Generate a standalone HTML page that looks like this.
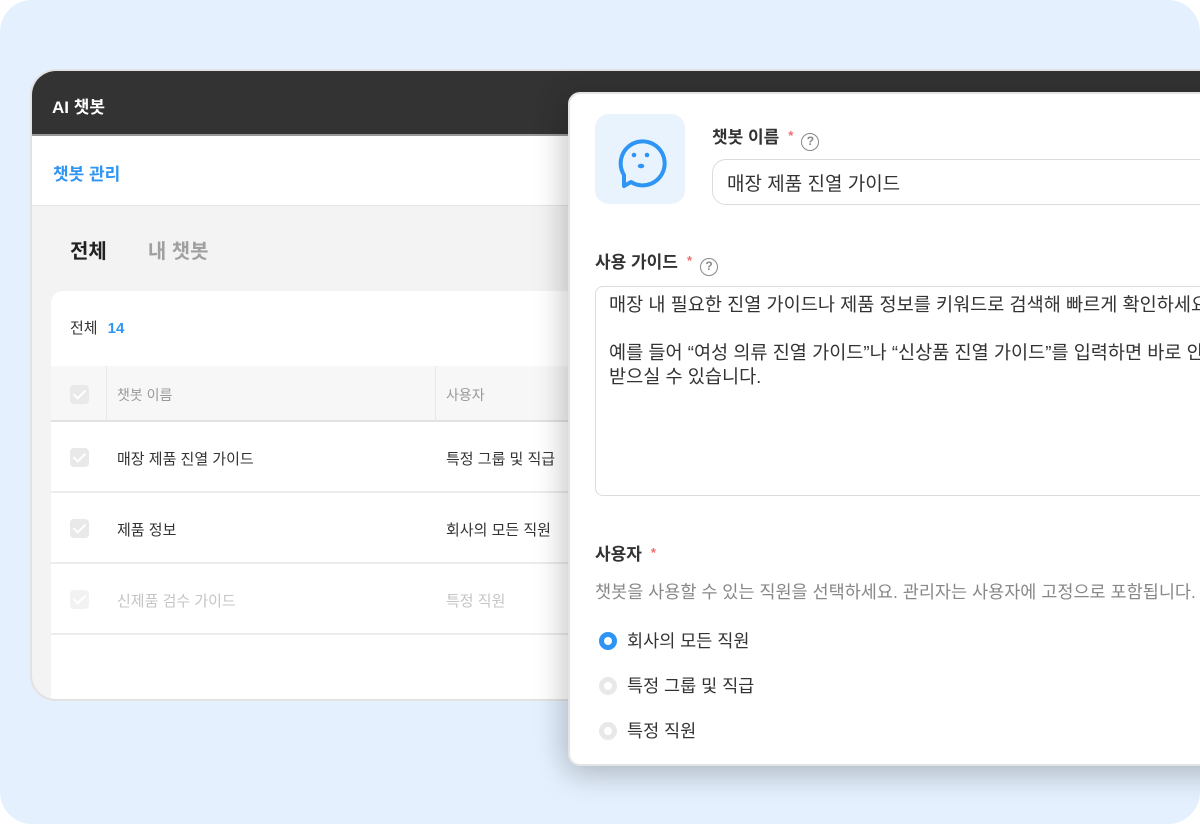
<!DOCTYPE html>
<html><head><meta charset="utf-8"><style>
*{box-sizing:border-box;margin:0;padding:0}
html,body{width:1200px;height:824px;overflow:hidden;background:#fff;font-family:"Liberation Sans","Noto Sans CJK KR",sans-serif}
.bg{position:absolute;left:0;top:0;width:1200px;height:824px;background:#e4f0fd;border-radius:32px}
.win{position:absolute;left:30px;top:69px;width:1200px;height:632px;border:2px solid #e2e2e2;border-radius:26px;overflow:hidden;background:#f3f3f3}
.hdr{height:65px;background:#333;color:#fff;font-weight:bold;font-size:17px;padding:22px 0 0 20px;border-bottom:2px solid #999}
.sub{height:70px;background:#fff;border-bottom:1px solid #e4e4e4;color:#2e95f5;font-weight:bold;font-size:17px;padding:24px 0 0 21px}
.tabs{position:absolute;top:164px;left:38px;font-size:20px;font-weight:bold;color:#222}
.tabs span{color:#a0a0a0;margin-left:41px}
.card{position:absolute;left:19px;top:220px;width:1200px;height:420px;background:#fff;border-radius:12px}
.cnt{position:absolute;left:19px;top:26px;font-size:15px;color:#333}
.cnt b{color:#2e95f5;margin-left:10px}
.th{position:absolute;left:0;top:75px;width:100%;height:56px;background:#f7f7f7;border-bottom:2px solid #e2e2e2;color:#9a9a9a;font-size:14px}
.row{position:absolute;left:0;width:100%;height:71px;border-bottom:2px solid #ececec;font-size:15px;color:#333}
.cb{position:absolute;left:19px;width:19px;height:19px;border-radius:4px;background:#e9e9e9}
.cb:after{content:"";position:absolute;left:6px;top:2px;width:5px;height:10px;border:solid #fff;border-width:0 2px 2px 0;transform:rotate(45deg)}
.c1{position:absolute;left:66px}.c2{position:absolute;left:395px}
.modal{position:absolute;left:568px;top:92px;width:700px;height:674px;background:#fff;border:2px solid #e4e4e4;border-radius:12px;box-shadow:0 10px 30px rgba(0,0,0,.18),-10px 0 30px rgba(0,0,0,.08)}
.ico{position:absolute;left:25px;top:20px;width:90px;height:90px;background:#e8f3fe;border-radius:14px}
.lbl{position:absolute;font-size:17px;font-weight:bold;color:#333}
.req{color:#f26b6b;font-size:13px;margin-left:9px;vertical-align:3px}
.q{display:inline-block;width:18px;height:18px;border:1.5px solid #888;border-radius:50%;font-size:12px;color:#888;text-align:center;line-height:15px;margin-left:8px;vertical-align:-2px;font-weight:bold}
.inp{position:absolute;left:142px;top:65px;width:600px;height:46px;border:1.5px solid #dcdcdc;border-radius:14px;font-size:19px;color:#333;padding:9px 0 0 14px}
.ta{position:absolute;left:25px;top:192px;width:700px;height:210px;border:1.5px solid #dcdcdc;border-radius:8px;font-size:18.6px;color:#333;padding:6px 0 0 13px;line-height:24px;white-space:nowrap}
.desc{position:absolute;left:25px;top:485px;font-size:17.5px;color:#888;white-space:nowrap}
.rad{position:absolute;left:29px;font-size:17.5px;color:#333}
.rad i{position:absolute;left:0;top:4px;width:18px;height:18px;border-radius:50%;border:5px solid #e8e8e8;background:#fff}
.rad.on i{border-color:#2e95f5}
.rad span{position:absolute;left:28px;top:0;white-space:nowrap}
</style></head><body>
<div class="bg"></div>
<div class="win">
 <div class="hdr">AI 챗봇</div>
 <div class="sub">챗봇 관리</div>
 <div class="tabs">전체<span>내 챗봇</span></div>
 <div class="card">
  <div class="cnt">전체<b>14</b></div>
  <div class="th"><div class="cb" style="top:19px"></div><div style="position:absolute;left:55px;top:0;height:56px;border-left:1px solid #e8e8e8"></div><div class="c1" style="top:19px">챗봇 이름</div><div style="position:absolute;left:384px;top:0;height:56px;border-left:1px solid #e8e8e8"></div><div class="c2" style="top:19px">사용자</div></div>
  <div class="row" style="top:131px"><div class="cb" style="top:26px"></div><div class="c1" style="top:26px">매장 제품 진열 가이드</div><div class="c2" style="top:26px">특정 그룹 및 직급</div></div>
  <div class="row" style="top:202px"><div class="cb" style="top:26px"></div><div class="c1" style="top:26px">제품 정보</div><div class="c2" style="top:26px">회사의 모든 직원</div></div>
  <div class="row" style="top:273px;color:#c4c4c4"><div class="cb" style="top:26px;background:#f2f2f2"></div><div class="c1" style="top:26px">신제품 검수 가이드</div><div class="c2" style="top:26px">특정 직원</div></div>
 </div>
</div>
<div class="modal">
 <div class="ico"><svg width="90" height="90" viewBox="0 0 90 90"><path d="M29 72 L29 61 A22 22 0 1 1 36 68 Z" fill="none" stroke="#2e95f5" stroke-width="4" stroke-linejoin="round"/><circle cx="39" cy="41" r="2.3" fill="#2e95f5"/><circle cx="52" cy="41" r="2.3" fill="#2e95f5"/><ellipse cx="46" cy="52" rx="3.3" ry="2.3" fill="#2e95f5"/></svg></div>
 <div class="lbl" style="left:142px;top:29px">챗봇 이름<span class="req">*</span><span class="q">?</span></div>
 <div class="inp">매장 제품 진열 가이드</div>
 <div class="lbl" style="left:25px;top:154px">사용 가이드<span class="req">*</span><span class="q">?</span></div>
 <div class="ta">매장 내 필요한 진열 가이드나 제품 정보를 키워드로 검색해 빠르게 확인하세요.<br><br>예를 들어 “여성 의류 진열 가이드”나 “신상품 진열 가이드”를 입력하면 바로 안내를<br>받으실 수 있습니다.</div>
 <div class="lbl" style="left:25px;top:446px">사용자<span class="req">*</span></div>
 <div class="desc">챗봇을 사용할 수 있는 직원을 선택하세요. 관리자는 사용자에 고정으로 포함됩니다.</div>
 <div class="rad on" style="top:534px"><i></i><span>회사의 모든 직원</span></div>
 <div class="rad" style="top:579px"><i></i><span>특정 그룹 및 직급</span></div>
 <div class="rad" style="top:624px"><i></i><span>특정 직원</span></div>
</div>
</body></html>
